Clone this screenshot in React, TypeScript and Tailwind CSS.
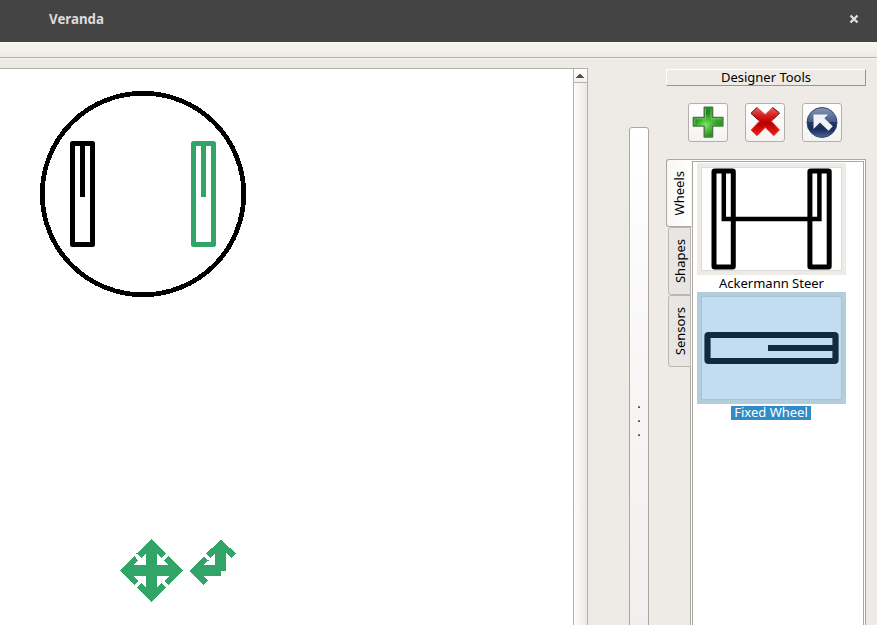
import React from "react";

const ICON_BUTTON =
  "flex h-[39px] w-10 items-center justify-center rounded-[3px] border border-[#b3b0ac] bg-linear-to-b from-white to-[#f4f3f2] pb-0.5";

function TitleBar() {
  return (
    <header className="flex h-[42px] shrink-0 items-center justify-between bg-[#444444] pr-[18px] pb-[5px] pl-[49px]">
      <h1 className="font-['Noto_Sans',sans-serif] text-[13.3px] leading-4 font-bold text-[#dcdcdc]">Veranda</h1>
      <button aria-label="Close">
        <svg width="10" height="10" viewBox="0 0 10 10" className="block">
          <path d="M1.5 1.5 L8.5 8.5 M8.5 1.5 L1.5 8.5" stroke="#e0e0e0" strokeWidth="2.3" />
        </svg>
      </button>
    </header>
  );
}

function Wheel({ x, color }: { x: number; color: string }) {
  return (
    <g stroke={color} strokeWidth="5" fill="none">
      <path d={`M${x + 2.5} 143.5 h20 v101 h-20 z`} strokeLinejoin="round" />
      <path d={`M${x + 12.5} 143 V197`} />
    </g>
  );
}

function RobotCanvas() {
  return (
    <svg width="573" height="556" viewBox="0 69 573 556" className="block shrink-0 bg-white">
      <circle cx="143" cy="194" r="100.8" fill="none" stroke="#000" strokeWidth="4.7" shapeRendering="crispEdges" />
      <Wheel x={70} color="#000000" />
      <Wheel x={191} color="#32a467" />
      <g fill="#32a467" shapeRendering="crispEdges" transform="translate(110 530)">
        <path d="M36 23 L31 28 L26.5 23.5 L41.5 8.8 L56 23.5 L51.5 28 L47 23 V35 H59 L54 30.5 L58.5 26 L73.2 40.5 L58.5 55.2 L54 51 L59 46 H47 V58 L51.5 53 L56 57.5 L41.5 72 L27 57.5 L31 53 L36 58 V46 H23.5 L28 51 L24.5 55 L9.8 40.5 L24.5 26 L28 30.5 L23.5 35 H36 Z" />
        <path d="M105 23 L100.5 28 L96 23.5 L111 9.8 L126 23.5 L121.5 28 L116 23 V41 H111 V46 H93.5 L98 50.5 L94 55 L79.8 41 L94 26.5 L98.5 30.5 L93.5 35 H105 Z" />
      </g>
    </svg>
  );
}

function ScrollBar() {
  return (
    <div className="flex w-[15px] shrink-0 flex-col border-x border-[#b4b1ad] bg-linear-to-r from-[#fdfdfc] to-[#ebe9e6]">
      <div className="flex h-[14px] shrink-0 items-center border-b border-[#b4b1ad] bg-linear-to-b from-white to-[#f3f1ef] pl-0.5">
        <svg width="8" height="4" viewBox="0 0 8 4" className="mt-px" shapeRendering="crispEdges">
          <path d="M3 0h2v1h1v1h1v1h1v1H0V3h1V2h1V1h1z" fill="#555350" />
        </svg>
      </div>
    </div>
  );
}

function Splitter() {
  return (
    <div className="mt-[59px] ml-[41px] flex h-[600px] w-5 shrink-0 flex-col items-center gap-3 rounded-[3px] border border-[#aaa7a3] bg-linear-to-b from-white via-[#f6f5f4] to-[#eeedec] pt-[278px]">
      {[0, 1, 2].map((dot) => (
        <span key={dot} className="h-0.5 w-0.5 shrink-0 bg-linear-to-b from-[#b58b80] to-[#593c38]" />
      ))}
    </div>
  );
}

function Toolbar() {
  return (
    <div className="mt-[17px] ml-[22px] flex gap-[17px]">
      <button className={ICON_BUTTON} aria-label="Add">
        <svg width="33" height="32" viewBox="0 0 33 32">
          <defs>
            <linearGradient id="plus" x1="0" y1="0" x2="0.8" y2="1">
              <stop stopColor="#63c64c" />
              <stop offset=".35" stopColor="#249b1c" />
              <stop offset=".58" stopColor="#69dc58" />
              <stop offset="1" stopColor="#12930a" />
            </linearGradient>
            <radialGradient id="plusGlow" cx="13" cy="19" r="12" gradientUnits="userSpaceOnUse">
              <stop stopColor="#8aee73" stopOpacity=".8" />
              <stop offset="1" stopColor="#128008" stopOpacity=".5" />
            </radialGradient>
          </defs>
          <path d="M12.2 1.2h8.4v10.3h10.3v8.6H20.6v11h-8.4v-11H1.3v-8.6h10.9z" fill="url(#plus)" stroke="#4d7548" strokeWidth="1.4" strokeLinejoin="round" />
          <path d="M13 2h6.8v10.3h10.3v7H19.8v11H13v-11H2v-7h11z" fill="url(#plusGlow)" />
          <path d="M13.5 2.8v10H2.8v6 M19 3v9.8h10.5" fill="none" stroke="#a0dc94" strokeOpacity=".7" strokeWidth=".8" />
        </svg>
      </button>
      <button className={ICON_BUTTON} aria-label="Delete">
        <svg width="31" height="31" viewBox="0 0 31 31">
          <defs>
            <linearGradient id="cross" x1="0" y1="0" x2="0" y2="1">
              <stop stopColor="#ef625d" />
              <stop offset=".3" stopColor="#d51b1b" />
              <stop offset=".55" stopColor="#b80000" />
              <stop offset="1" stopColor="#f51b17" />
            </linearGradient>
          </defs>
          <path d="M7 1.5 L15.2 8.5 L22.5 1.5 L29.5 7 L21.5 15.2 L29.5 24 L23.8 29.8 L15.2 21.6 L7 29.8 L1 24 L9.3 15.2 L1 7.3 Z" fill="url(#cross)" stroke="#d55551" strokeWidth="1" strokeLinejoin="round" />
          <path d="M7.8 13.5 L1 7.3 L7 1.5 M22.5 1.5 L29.5 7 L23.5 13" fill="none" stroke="#542020" strokeWidth="1" />
        </svg>
      </button>
      <button className={ICON_BUTTON} aria-label="Select">
        <svg width="32" height="32" viewBox="0 0 32 32">
          <defs>
            <linearGradient id="pointer" x1="0" y1="0" x2="0" y2="1">
              <stop stopColor="#8997b6" />
              <stop offset=".48" stopColor="#465b89" />
              <stop offset=".5" stopColor="#233866" />
              <stop offset=".72" stopColor="#192b59" />
              <stop offset="1" stopColor="#4c6699" />
            </linearGradient>
          </defs>
          <circle cx="16" cy="16.5" r="15" fill="url(#pointer)" stroke="#34466e" strokeWidth="1" />
          <path d="M7.5 8.5 H22 L18.3 12.2 L26.8 20.3 L22.5 24.7 L14 16.5 L7.5 23 Z" fill="#f2f3f5" />
        </svg>
      </button>
    </div>
  );
}

function Tab({ label, className }: { label: string; className: string }) {
  return (
    <button className={`flex shrink-0 items-center justify-center rounded-l-[3px] border ${className}`}>
      <span className="rotate-180 leading-4 [writing-mode:vertical-rl]">{label}</span>
    </button>
  );
}

function AckermannPreview() {
  return (
    <svg width="141" height="104" viewBox="702 168 139 102" className="block border border-[#dedad8] bg-white">
      <g fill="none" stroke="#000" strokeWidth="5" strokeLinejoin="round">
        <rect x="714" y="171" width="19.3" height="96" rx="0.8" />
        <rect x="809.9" y="171" width="19.3" height="96" rx="0.8" />
        <path d="M723.8 171 V219 H819.4 V171" strokeWidth="4.5" strokeLinejoin="miter" />
      </g>
    </svg>
  );
}

function FixedWheelPreview() {
  return (
    <svg width="141" height="104" viewBox="702 297 139 102" className="block border border-[#aac4d3] bg-[#c2ddf0]">
      <g fill="none" stroke="#102b3e" strokeWidth="6.2" strokeLinejoin="round">
        <rect x="707.5" y="335" width="128" height="26" rx="1" />
        <path d="M768 348 H836" />
      </g>
    </svg>
  );
}

function DesignerPanel() {
  return (
    <aside className="mt-px ml-[17px] flex w-[200px] shrink-0 flex-col">
      <h2 className="h-[17px] shrink-0 border border-t-white border-r-[#979491] border-b-[#979491] border-l-white text-center leading-[15px]">
        Designer Tools
      </h2>
      <Toolbar />
      <div className="mt-[17px] flex min-h-0 flex-1">
        <nav className="z-10 -mr-0.5 flex w-[26px] shrink-0 flex-col items-end">
          <Tab label="Wheels" className="h-[68px] w-[26px] border-[#aaa7a3] border-r-transparent bg-linear-to-r from-[#f8f7f5] to-white" />
          <Tab label="Shapes" className="mr-px h-[68px] w-[23px] border-[#bbb8b4] bg-[#e8e6e3] pl-px" />
          <Tab label="Sensors" className="mr-px h-[72px] w-[23px] border-[#bbb8b4] bg-[#e8e6e3] pl-px" />
        </nav>
        <div className="min-w-0 flex-1 border border-b-0 border-[#aaa7a3] bg-white p-px pb-0">
          <div className="flex h-full flex-col border border-b-0 border-[#aaa7a3] pt-px pl-1">
            <figure className="w-[149px]">
              <div className="bg-[#eeeae6] p-1"><AckermannPreview /></div>
              <figcaption className="h-[17px] text-center leading-[17px]">Ackermann Steer</figcaption>
            </figure>
            <figure className="w-[149px]">
              <div className="bg-[#b2cddb] p-1"><FixedWheelPreview /></div>
              <figcaption className="mt-0.5 flex pl-[34px]">
                <span className="h-[14px] w-20 bg-[#308cc6] text-center leading-[13px] text-white">Fixed Wheel</span>
              </figcaption>
            </figure>
          </div>
        </div>
      </div>
    </aside>
  );
}

export default function App() {
  return (
    <div className="flex h-[625px] w-[877px] flex-col overflow-hidden bg-[#eeebe6] font-['Noto_Sans',sans-serif] text-[13px] text-black">
      <TitleBar />
      <div className="h-4 shrink-0 border-b border-[#b4b1ad] bg-linear-to-b from-[#f8f6f1] to-[#eeebe6]" />
      <div className="h-[10px] shrink-0 border-t border-[#f6f4f1]" />
      <main className="flex min-h-0 flex-1">
        <div className="flex w-[588px] shrink-0 border-t border-[#b4b1ad]">
          <RobotCanvas />
          <ScrollBar />
        </div>
        <Splitter />
        <DesignerPanel />
      </main>
    </div>
  );
}
